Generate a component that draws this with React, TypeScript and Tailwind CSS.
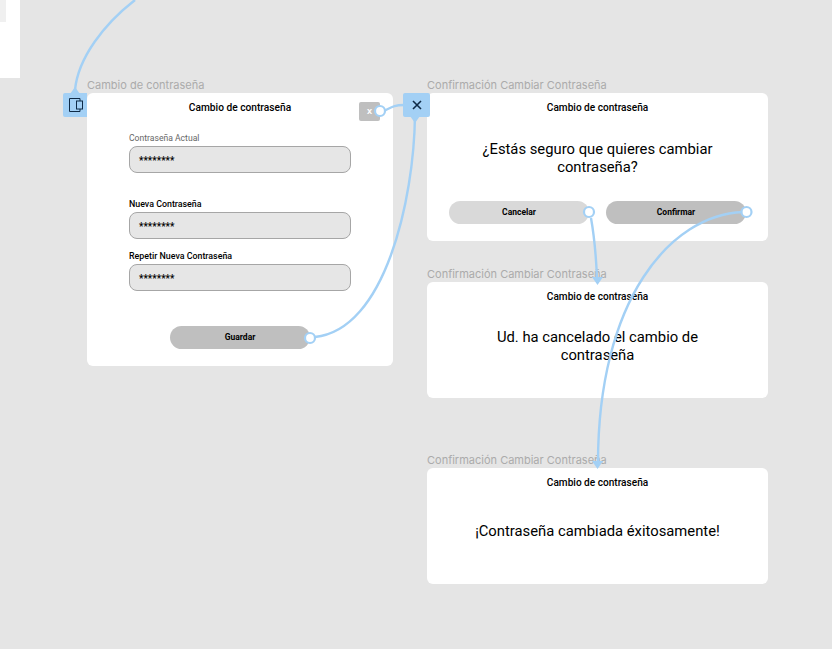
import type { ReactNode } from "react";

function Frame({ label, className, children }: { label: string; className: string; children: ReactNode }) {
  return (
    <div className="flex flex-col">
      <div className="whitespace-nowrap font-['Inter',sans-serif] text-[11px] leading-[15px] text-[#ababab]">{label}</div>
      <div className={`relative flex flex-col rounded-[6px] bg-white font-['Roboto',sans-serif] text-black ${className}`}>
        {children}
      </div>
    </div>
  );
}

function Title({ className = "" }: { className?: string }) {
  return <div className={`mt-[8px] text-center font-medium leading-[14px] ${className}`}>Cambio de contraseña</div>;
}

function Field({ label, muted, className = "" }: { label: string; muted?: boolean; className?: string }) {
  return (
    <div className={className}>
      <div className={`leading-[12px] ${muted ? "text-[8.6px] font-normal text-[#666666]" : "text-[8.85px] font-medium text-black"}`}>
        {label}
      </div>
      <div className="mt-[2px] flex h-[27px] items-center rounded-[8px] border border-[#a6a6a6] bg-[#e6e6e6] pl-[9px] pt-[2px] text-[10px] font-medium">
        ********
      </div>
    </div>
  );
}

function Pill({ text, className }: { text: string; className: string }) {
  return (
    <div className={`flex h-[23px] w-[140px] items-center justify-center rounded-full text-[8.5px] font-bold ${className}`}>
      {text}
    </div>
  );
}

export default function App() {
  return (
    <div className="relative flex h-[649px] w-[832px] items-start gap-[34px] overflow-hidden bg-[#e5e5e5] pl-[87px] pt-[78px]">
      <div className="absolute left-0 top-0 h-[78px] w-[20px] bg-white">
        <div className="h-[22px] w-[6px] bg-[#f0f0f0]" />
      </div>

      <Frame label="Cambio de contraseña" className="h-[273px] w-[306px]">
        <Title className="text-[10.2px]" />
        <div className="flex flex-col px-[42px]">
          <Field muted label="Contraseña Actual" className="mt-[17px]" />
          <Field label="Nueva Contraseña" className="mt-[25px]" />
          <Field label="Repetir Nueva Contraseña" className="mt-[11px]" />
        </div>
        <Pill text="Guardar" className="ml-[83px] mt-[35px] bg-[#bfbfbf]" />
        <div className="absolute right-[13px] top-[9px] flex h-[19px] w-[21px] items-center justify-center rounded-[2px] bg-[#bfbfbf] text-[8px] font-bold text-white">
          X
        </div>
      </Frame>

      <div className="flex flex-col">
        <Frame label="Confirmación Cambiar Contraseña" className="h-[148px] w-[341px]">
          <Title className="text-[10.1px]" />
          <div className="mx-auto mt-[25px] w-[270px] text-center text-[14.8px] leading-[18px]">
            ¿Estás seguro que quieres cambiar contraseña?
          </div>
          <div className="mt-[25px] flex gap-[17px] pl-[22px]">
            <Pill text="Cancelar" className="bg-[#d9d9d9]" />
            <Pill text="Confirmar" className="bg-[#bfbfbf]" />
          </div>
        </Frame>

        <div className="mt-[26px]">
          <Frame label="Confirmación Cambiar Contraseña" className="h-[116px] w-[341px]">
            <Title className="text-[10.1px]" />
            <div className="mx-auto mt-[24px] w-[270px] text-center text-[14.8px] leading-[18px]">
              Ud. ha cancelado el cambio de contraseña
            </div>
          </Frame>
        </div>

        <div className="mt-[55px]">
          <Frame label="Confirmación Cambiar Contraseña" className="h-[116px] w-[341px]">
            <Title className="text-[10.1px]" />
            <div className="mt-[32px] text-center text-[14.8px] leading-[18px]">¡Contraseña cambiada éxitosamente!</div>
          </Frame>
        </div>
      </div>

      {/* prototype connectors, on top of the frames */}
      <svg className="pointer-events-none absolute left-0 top-0" width="832" height="649" fill="none">
        <g stroke="#a3d0f5" strokeWidth="2.4">
          <path d="M135 0C104 24 78 58 75 90" />
          <path d="M384 111C392 107 394 105 404 105" />
          <path d="M415 115C414 200 385 330 315 337" />
          <path d="M591 218C594 235 596 255 597 278" />
          <path d="M743 212C670 215 598 300 598 463" />
        </g>
        <g fill="#a3d0f5">
          <path d="M70 94 L75 87 L80 94Z" />
          <path d="M410 116 L415 123 L420 116Z" />
          <path d="M592 277 L597.5 285 L603 277Z" />
          <path d="M592 461 L597.5 469 L603 461Z" />
        </g>
        <g fill="#ffffff" stroke="#a3d0f5" strokeWidth="2.2">
          <circle cx="380" cy="111" r="5" />
          <circle cx="310" cy="338" r="5" />
          <circle cx="589" cy="212" r="5" />
          <circle cx="746.5" cy="212" r="5" />
        </g>
      </svg>

      <div className="absolute left-[63px] top-[93px] flex h-[24px] w-[24px] items-center justify-center rounded-l-[2px] bg-[#a3d0f5]">
        <svg width="16" height="16" viewBox="0 0 16 16" fill="none" stroke="#0e2a47" strokeWidth="1">
          <path d="M13 4V1.5H2.5V14.5H13V12" />
          <rect x="9.5" y="4" width="6" height="8" />
        </svg>
      </div>

      <div className="absolute left-[403px] top-[93px] flex h-[24px] w-[27px] items-center justify-center rounded-[2px] bg-[#a3d0f5] pl-[1px]">
        <svg width="10" height="10" viewBox="0 0 10 10" stroke="#0e2a47" strokeWidth="1.6">
          <path d="M1 1L9 9M9 1L1 9" />
        </svg>
      </div>
    </div>
  );
}
